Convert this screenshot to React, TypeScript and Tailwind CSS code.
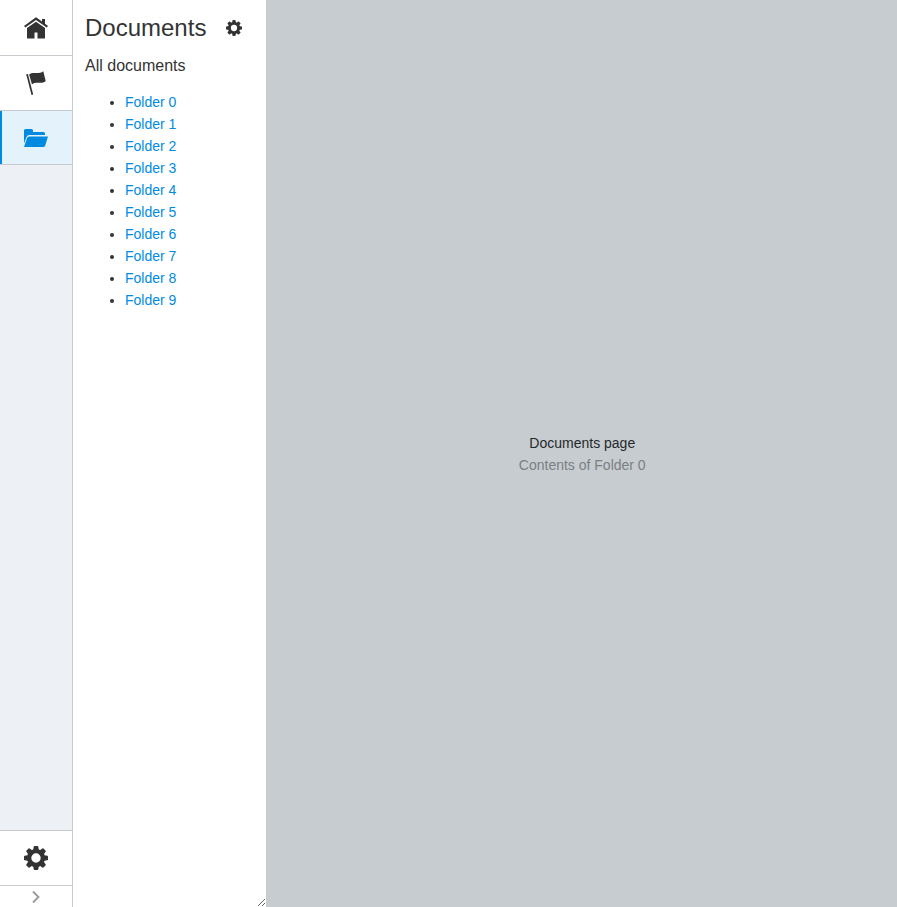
const folders = Array.from({ length: 10 }, (_, i) => `Folder ${i}`);

function HomeIcon() {
  return (
    <svg width="24" height="24" viewBox="0 0 24 24" fill="currentColor">
      <path d="M12 1.200 18 5.500V3h3v4.700l3 2.200-1.300 1.700L12 4 1.300 11.600 0 9.900Z" />
      <path d="M12 5.700 21 12.100V22.600h-7.500v-6h-3v6H3V12.100Z" />
    </svg>
  );
}

function FlagIcon() {
  return (
    <svg width="24" height="24" viewBox="0 0 24 24" fill="currentColor">
      <path d="M2.200 3.300 3.900 2.900 9.200 23.500 7.500 24Z" />
      <path d="M5.100 3.500C7 1.800 9 2 11.500 2C14.500 2.100 17 1.900 19.300 .2L21.700 10C19.500 12 17.500 11.900 14.500 11.800C12 11.700 9.900 11.800 8 13.500Z" />
    </svg>
  );
}

function FolderIcon() {
  return (
    <svg width="24" height="24" viewBox="0 0 24 24" fill="currentColor">
      <path d="M0 17.500V4.500Q0 3 1.500 3H7.500Q9 3 9 4.500V6H19.500Q21 6 21 7.500V9H5.500Q3.200 9 2.500 11Z" />
      <path d="M0 21 3 12.200Q3.500 10.500 5.200 10.500H24L21.200 19.500Q20.700 21 19 21Z" />
    </svg>
  );
}

const toothAngles = [0, 45, 90, 135, 180, 225, 270, 315];

function GearIcon({ size }: { size: number }) {
  return (
    <svg width={size} height={size} viewBox="0 0 24 24" fill="currentColor">
      <circle cx="12" cy="12" r="6.900" fill="none" stroke="currentColor" strokeWidth="4.400" />
      {toothAngles.map((angle) => (
        <path
          key={angle}
          d="M9 5 9.700 .7Q9.900 0 10.600 0H13.400Q14.100 0 14.300 .7L15 5Z"
          transform={`rotate(${angle} 12 12)`}
        />
      ))}
    </svg>
  );
}

export default function App() {
  return (
    <div className="flex h-screen w-full overflow-hidden bg-[#c7ccd0] font-['Liberation_Sans',Arial,sans-serif] text-sm leading-[22px] text-[#333]">
      <nav className="flex w-[73px] shrink-0 flex-col border-r border-[#c8cacf] bg-[#edf0f4]">
        <button className="flex h-14 shrink-0 items-center justify-center border-b border-[#c8cacf] bg-white">
          <HomeIcon />
        </button>
        <button className="flex h-[55px] shrink-0 items-center justify-center border-b border-[#c8cacf] bg-white">
          <FlagIcon />
        </button>
        <button className="flex h-[54px] shrink-0 border-b border-[#c8cacf] bg-[#e4f3fb] text-[#008be1]">
          <span className="flex h-full w-full items-center justify-center border-l-2 border-[#008be1] pr-0.5">
            <FolderIcon />
          </span>
        </button>
        <button className="mt-auto flex h-[55px] shrink-0 items-center justify-center border-t border-[#c8cacf] bg-white">
          <GearIcon size={24} />
        </button>
        <button className="flex h-[22px] shrink-0 items-center justify-center border-t border-[#c8cacf] bg-white text-[#999]">
          <svg width="12" height="14" viewBox="0 0 12 14" fill="none" stroke="currentColor" strokeWidth="1.800">
            <path d="M3 1.500 8.500 7 3 12.500" />
          </svg>
        </button>
      </nav>

      <aside className="w-[193px] shrink-0 resize-x overflow-auto bg-white px-3">
        <header className="flex h-14 items-center justify-between pr-3">
          <h1 className="text-2xl">Documents</h1>
          <GearIcon size={16} />
        </header>
        <h2 className="text-base leading-5">All documents</h2>
        <ul className="mt-[15px] list-disc pl-10">
          {folders.map((name) => (
            <li key={name}>
              <a href="#" className="text-[#008be1]">{name}</a>
            </li>
          ))}
        </ul>
      </aside>

      <main className="flex flex-1 flex-col items-center justify-center pl-[1.5px]">
        <p className="text-[#25292c]">Documents page</p>
        <p className="text-[#7b7f83]">Contents of Folder 0</p>
      </main>
    </div>
  );
}
